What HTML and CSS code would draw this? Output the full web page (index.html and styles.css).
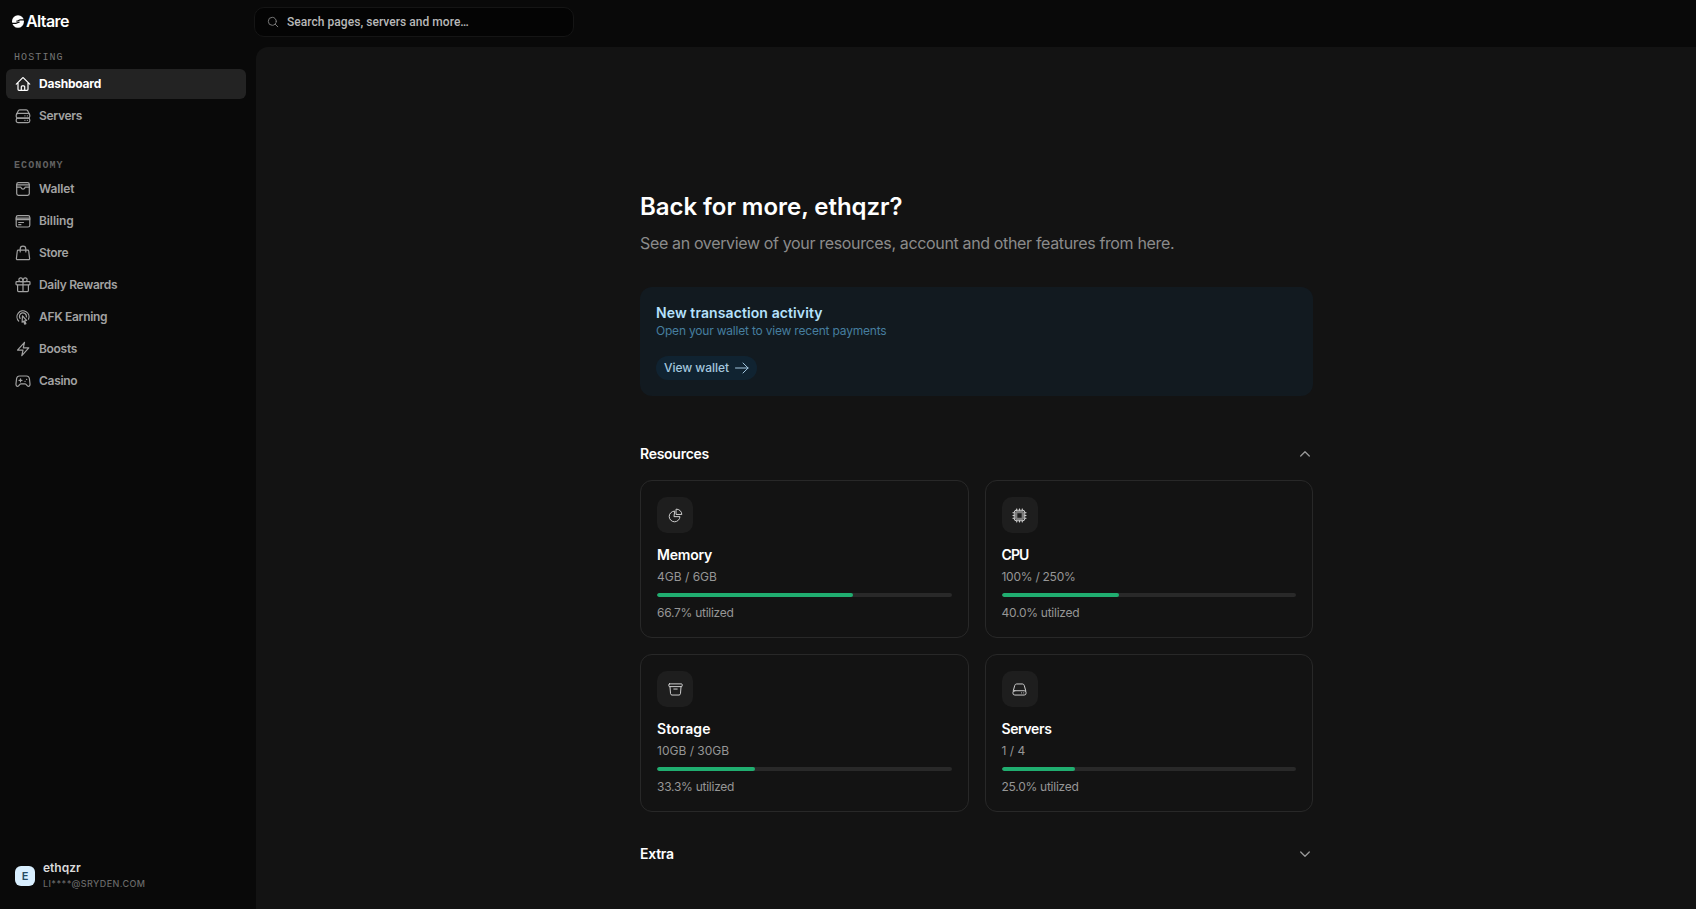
FILE: index.html
```html
<!DOCTYPE html>
<html lang="en">
<head>
<meta charset="utf-8">
<title>Altare</title>
<link rel="stylesheet" href="styles.css">
</head>
<body>
<div class="app">
  <aside class="sidebar">
    <div class="brand">
      <svg class="brand-mark" viewBox="0 0 12 13"><ellipse cx="6" cy="6.500" rx="6" ry="6.300"/><path class="brand-cut" d="M12.500 4.900H8.300C6.700 4.900 6.500 6.100 4.800 6.100M-.5 8.300h4.200c1.600 0 1.800-1.200 3.500-1.200"/></svg>
      <span class="brand-name">Altare</span>
    </div>
    <div class="group-label">HOSTING</div>
    <nav class="nav">
      <a class="nav-item active"><svg class="icon" viewBox="0 0 16 16"><path d="M1.300 8.200 7.300 2.100a1 1 0 0 1 1.400 0l6 6.100M3 6.700v6.600a1 1 0 0 0 1 1h8a1 1 0 0 0 1-1V6.700M6.300 14.200v-3.400c0-.5.400-.9.900-.9h1.600c.5 0 .9.400.9.900v3.400"/></svg><span>Dashboard</span></a>
      <a class="nav-item"><svg class="icon" viewBox="0 0 16 16"><rect x="1.200" y="5.400" width="13.600" height="4.700" rx="1.800"/><rect x="1.200" y="10.100" width="13.600" height="4.500" rx="1.800"/><path d="M1.500 6.600 3 3.200c.3-.8 1-1.300 1.800-1.300h6.400c.8 0 1.500.5 1.800 1.300l1.500 3.400M12.300 7.800h.1M12.300 12.300h.1M9.900 7.800h.1M9.900 12.300h.1"/></svg><span>Servers</span></a>
    </nav>
    <div class="group-label group-economy">ECONOMY</div>
    <nav class="nav">
      <a class="nav-item"><svg class="icon" viewBox="0 0 16 16"><rect x="1.700" y="1.700" width="12.600" height="12.600" rx="1.700"/><path d="M1.900 3.900h12.200M1.700 6.200h3.900c.3 0 .4.200.5.500a2 2 0 0 0 3.800 0c.1-.3.200-.5.500-.5h3.900"/></svg><span class="wallet-label">Wallet</span></a>
      <a class="nav-item"><svg class="icon" viewBox="0 0 16 16"><rect x="1.200" y="2.600" width="13.600" height="11.400" rx="1.800"/><path d="M1.200 5.200h13.600M1.200 6.600h13.600M3.700 9.500h4.800M3.700 11.700h2.200"/></svg><span class="wallet-label">Billing</span></a>
      <a class="nav-item"><svg class="icon" viewBox="0 0 16 16"><path d="M5.200 6.900V4a2.800 2.800 0 0 1 5.600 0v2.900M3.200 5.200h9.600c.5 0 .8.300.9.800l.9 7.600c.1.500-.4 1-.9 1H2.300c-.5 0-1-.5-.9-1L2.300 6c.1-.5.400-.8.900-.8z"/></svg><span>Store</span></a>
      <a class="nav-item"><svg class="icon" viewBox="0 0 16 16"><path d="M2.600 8v5.600c0 .6.400 1 1 1h8.800c.6 0 1-.4 1-1V8M8 4.700v9.900M8 4.700H5.700a1.900 1.900 0 1 1 1.900-2.300L8 4.700l.4-2.300a1.900 1.900 0 1 1 1.900 2.300z"/><rect x="1" y="4.700" width="14" height="3.100" rx=".8"/></svg><span>Daily Rewards</span></a>
      <a class="nav-item"><svg class="icon" viewBox="0 0 16 16"><path d="M3.700 12a6 6 0 1 1 9.800-1.800M5.100 9.400a3.500 3.500 0 1 1 6.300-1.600M7.500 6.800l-.4 6.400 1.500-1 1.200 3 1.100-.4-1.200-3 1.900-.3z"/></svg><span>AFK Earning</span></a>
      <a class="nav-item"><svg class="icon" viewBox="0 0 16 16"><path d="M2.500 9.100 9.500 1.300 8.300 6.800h5.500l-7 7.900L8 9.100z"/></svg><span>Boosts</span></a>
      <a class="nav-item"><svg class="icon" viewBox="0 0 16 16"><path d="M4.500 3h7c1.500 0 2.600 1 2.900 2.500l.6 5.200c.2 1.500-.5 2.700-1.700 2.700-1.500 0-1.600-2.500-3.200-2.500H5.900c-1.600 0-1.700 2.500-3.200 2.500C1.500 13.400.8 12.200 1 10.700l.6-5.200C1.900 4 3 3 4.500 3zM4 7.300h3M5.500 5.800v3M11.600 6.400h.1M10 8.300h.1"/></svg><span>Casino</span></a>
    </nav>
    <div class="account">
      <div class="avatar">E</div>
      <div class="account-text">
        <div class="account-name">ethqzr</div>
        <div class="account-mail">LI****@SRYDEN.COM</div>
      </div>
    </div>
  </aside>
  <div class="page">
    <header class="topbar">
      <div class="search"><svg class="search-icon" viewBox="0 0 12 12"><circle cx="5.300" cy="5.300" r="4"/><path d="m8.300 8.300 2.500 2.500"/></svg><span>Search pages, servers and more…</span></div>
    </header>
    <main class="main">
      <div class="content">
        <h1 class="title">Back for more, ethqzr?</h1>
        <p class="subtitle">See an overview of your resources, account and other features from here.</p>
        <section class="notice">
          <h2 class="notice-title">New transaction activity</h2>
          <p class="notice-text">Open your wallet to view recent payments</p>
          <a class="notice-button"><span>View wallet</span><svg class="arrow" viewBox="0 0 14 12"><path d="M.5 6h12.600M8 1l5.100 5L8 11"/></svg></a>
        </section>
        <div class="section-head"><h2 class="section-title">Resources</h2><svg class="chevron" viewBox="0 0 16 16"><path d="m3.700 10 4.300-4.300 4.300 4.300"/></svg></div>
        <div class="cards">
          <article class="card">
            <div class="tile"><svg class="tile-icon" viewBox="0 0 16 16"><path d="M6.800 3.300a5.700 5.700 0 1 0 5.900 5.900H6.800z"/><path d="M9 1.200a5.600 5.600 0 0 1 5.700 5.700H9z"/></svg></div>
            <h3 class="card-title memory">Memory</h3><p class="card-text gb">4GB / 6GB</p>
            <div class="bar"><div class="fill" style="width:66.5%"></div></div><p class="card-text">66.7% utilized</p>
          </article>
          <article class="card">
            <div class="tile"><svg class="tile-icon" viewBox="0 0 16 16"><rect x="2.400" y="2.400" width="11.200" height="11.200" rx="2"/><rect class="core" x="4.400" y="4.400" width="7.200" height="7.200" rx=".6"/><path d="M5 1v1.400M8 1v1.400M11 1v1.400M5 13.600V15M8 13.600V15M11 13.600V15M1 5h1.400M1 8h1.400M1 11h1.400M13.600 5H15M13.600 8H15M13.600 11H15"/></svg></div>
            <h3 class="card-title cpu">CPU</h3><p class="card-text">100% / 250%</p>
            <div class="bar"><div class="fill" style="width:40%"></div></div><p class="card-text">40.0% utilized</p>
          </article>
          <article class="card">
            <div class="tile"><svg class="tile-icon" viewBox="0 0 16 16"><rect x=".9" y="2" width="14.200" height="2.900" rx=".7"/><path d="m2.100 4.900.6 7.500c.1.900.7 1.500 1.500 1.500h7.600c.8 0 1.400-.6 1.500-1.500l.6-7.500M6.200 7.500h3.600"/></svg></div>
            <h3 class="card-title storage">Storage</h3><p class="card-text gb">10GB / 30GB</p>
            <div class="bar"><div class="fill" style="width:33.3%"></div></div><p class="card-text">33.3% utilized</p>
          </article>
          <article class="card">
            <div class="tile"><svg class="tile-icon" viewBox="0 0 16 16"><path d="M1.300 9.500 2.900 3.800C3.200 2.700 4 2.100 5 2.100h6c1 0 1.800.6 2.100 1.700l1.600 5.700"/><rect x="1" y="9.300" width="14" height="4.600" rx="2"/><path d="M10.200 11.600h.1M12.500 11.600h.1"/></svg></div>
            <h3 class="card-title">Servers</h3><p class="card-text gb">1 / 4</p>
            <div class="bar"><div class="fill" style="width:25%"></div></div><p class="card-text">25.0% utilized</p>
          </article>
        </div>
        <div class="section-head extra"><h2 class="section-title">Extra</h2><svg class="chevron" viewBox="0 0 16 16"><path d="m3.700 6 4.300 4.300L12.300 6"/></svg></div>
      </div>
    </main>
  </div>
</div>
</body>
</html>
```
FILE: styles.css
```css
* { box-sizing: border-box; }
body { margin: 0; background: #090909; color: #fff; font-family: Inter, sans-serif; font-size: 12px; line-height: 16px; }
h1, h2, h3, p { margin: 0; }
svg { display: block; flex: none; fill: none; stroke: currentColor; stroke-linecap: round; stroke-linejoin: round; }
.app { display: flex; height: 909px; overflow: hidden; }

.sidebar { width: 256px; flex: none; display: flex; flex-direction: column; padding: 10px 10px 18px 6px; }
.brand { display: flex; align-items: center; gap: 2px; height: 23px; padding-left: 6px; }
.brand-mark { width: 12px; height: 13px; fill: #fff; stroke: none; }
.brand-cut { fill: none; stroke: #090909; stroke-width: 1.2; }
.brand-name { font-size: 16px; line-height: 23px; font-weight: 600; letter-spacing: -0.6px; }
.group-label { margin: 16px 0 3px; padding-left: 8px; height: 17px; font: 400 10px/17px "Liberation Mono", monospace; letter-spacing: 1.1px; color: #757575; }
.group-economy { margin: 26px 0 0; font-weight: 700; color: #626262; }
.nav { display: flex; flex-direction: column; gap: 2px; }
.nav-item { display: flex; align-items: center; gap: 8px; height: 30px; padding-left: 9px; border-radius: 6px; color: #a2a2a2; font-weight: 600; letter-spacing: -0.3px; }
.wallet-label { letter-spacing: -0.1px; }
.nav-item.active { background: #232323; color: #fff; font-weight: 700; letter-spacing: -0.22px; }
.icon { width: 16px; height: 16px; stroke-width: 1.2; }
.account { display: flex; align-items: center; gap: 8px; margin-top: auto; padding-left: 9px; }
.avatar { width: 20px; height: 20px; border-radius: 6px; background: #d9efff; color: #254a63; font-size: 11px; line-height: 20px; font-weight: 600; text-align: center; }
.account-name { font-weight: 600; color: #dadada; }
.account-mail { font-size: 9px; line-height: 15px; font-weight: 500; letter-spacing: 0.41px; color: #686868; }

.page { flex: 1; display: flex; flex-direction: column; }
.topbar { height: 47px; padding-top: 7px; }
.search { display: flex; align-items: center; gap: 7px; width: 320px; height: 30px; margin-left: -2px; padding-left: 13px; background: #040404; border: 1px solid #151515; border-radius: 10px; font: 500 12px/16px Roboto, sans-serif; letter-spacing: 0.05px; color: #b8b8b8; }
.search-icon { width: 12px; height: 12px; margin-left: -1px; margin-right: 1px; color: #777; }
.main { flex: 1; padding: 144px 0 0 384px; background: #131313; border-top-left-radius: 12px; }
.content { width: 673px; }
.title { font-size: 24px; line-height: 32px; font-weight: 600; letter-spacing: -0.04px; }
.subtitle { margin-top: 8px; font-size: 16px; line-height: 24px; letter-spacing: -0.35px; color: #8b8b8b; }
.notice { margin-top: 32px; padding: 16px; height: 109px; border-radius: 12px; background: #121a20; }
.notice-title { font-size: 14px; line-height: 20px; font-weight: 600; letter-spacing: 0.1px; color: #b5e1fc; }
.notice-text { letter-spacing: -0.2px; color: #467e9f; }
.notice-button { display: flex; align-items: center; gap: 6px; width: 101px; height: 24px; margin-top: 17px; padding-left: 8px; border-radius: 12px; background: #102331; color: #a3c7df; font-weight: 500; letter-spacing: -0.04px; }
.arrow { width: 14px; height: 12px; }
.section-head { display: flex; align-items: center; justify-content: space-between; margin-top: 48px; height: 20px; }
.section-title { font-size: 14px; line-height: 20px; font-weight: 600; letter-spacing: -0.27px; }
.chevron { width: 16px; height: 16px; color: #999; stroke-width: 1.3; }
.cards { display: grid; grid-template-columns: 1fr 1fr; gap: 16px; margin-top: 16px; }
.card { height: 158px; padding: 16px; border: 1px solid #282828; border-radius: 12px; }
.tile { display: flex; align-items: center; justify-content: center; width: 36px; height: 36px; border-radius: 10px; background: #1e1e1e; color: #d8d8d8; }
.tile-icon { width: 15px; height: 15px; }
.core { stroke-width: 2.6; stroke: #7c7c7c; }
.card-title { margin-top: 12px; font-size: 14px; line-height: 20px; font-weight: 600; letter-spacing: -0.38px; }
.card-title.memory { letter-spacing: -0.2px; }
.card-title.cpu { letter-spacing: -0.88px; }
.card-title.storage { letter-spacing: 0.08px; }
.card-text { margin-top: 4px; letter-spacing: -0.26px; color: #969696; }
.card-text.gb { letter-spacing: 0; }
.bar { height: 4px; margin: 8px 0; border-radius: 2px; background: #292929; overflow: hidden; }
.bar + .card-text { margin-top: 0; }
.fill { height: 4px; border-radius: 2px; background: #20ae70; }
.extra { margin-top: 32px; }
```
